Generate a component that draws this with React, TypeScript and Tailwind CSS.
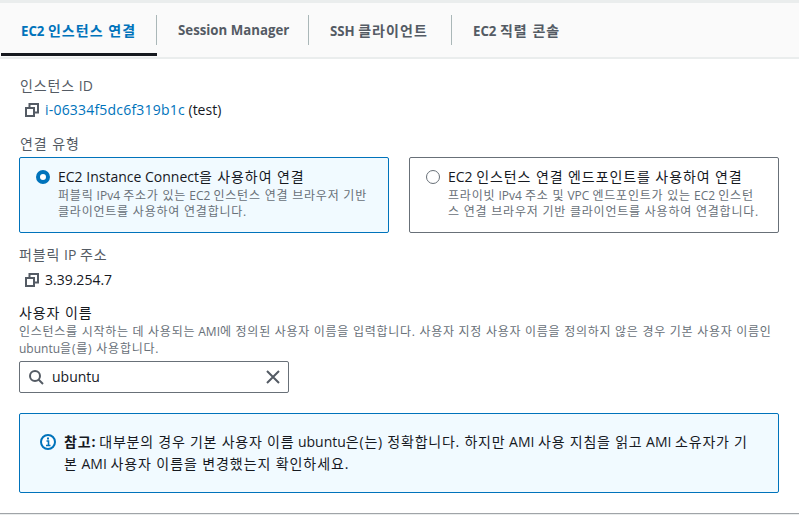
const font = "font-['Open_Sans','Noto_Sans_CJK_KR',sans-serif]";

// hangul in the shot is wider than Noto's, so hangul runs get some tracking
function K({ children, cls = "tracking-[0.065em]" }: { children: string; cls?: string }) {
  const parts = children.split(/([\uac00-\ud7a3]+(?:[ .,:()]*[\uac00-\ud7a3]+)*)/);
  return (
    <span>
      {parts.map((p, i) =>
        i % 2 === 1 ? (
          <span key={i} className={cls}>
            {p}
          </span>
        ) : (
          <span key={i}>{p}</span>
        ),
      )}
    </span>
  );
}

function CopyIcon() {
  return (
    <svg viewBox="0 0 14 14" className="h-[14px] w-[14px] shrink-0" fill="none" stroke="#545b64" strokeWidth="2">
      <path d="M1 5h8v8H1z" />
      <path d="M4.5 4V1H13v8.5h-3.5" />
    </svg>
  );
}

function Tab({ label, width, active, last }: { label: string; width: string; active?: boolean; last?: boolean }) {
  return (
    <div className={`relative flex h-[53px] items-center pt-[2px] pl-[21px] text-[13.25px] font-bold whitespace-nowrap ${width} ${active ? "text-[#0073bb]" : "text-[#545b64]"}`}>
      <K cls="text-[14px] tracking-[0.075em]">{label}</K>
      {active && <div className="absolute right-0 bottom-0 left-[1px] h-[3px] bg-[#16191f]" />}
      {!last && <div className="absolute top-3 right-0 h-[30px] w-px bg-[#aab7b8]" />}
    </div>
  );
}

function Option({ title, lines, active }: { title: string; lines: string[]; active?: boolean }) {
  return (
    <div className={`flex h-[76px] w-[370px] gap-2 rounded-[2px] border px-4 pt-[10px] ${active ? "border-[#0073bb] bg-[#f1faff]" : "border-[#687078] bg-white"}`}>
      {active ? (
        <div className="mt-[2px] h-[14px] w-[14px] shrink-0 rounded-full border-[4px] border-[#0073bb] bg-white" />
      ) : (
        <div className="mt-[2px] h-[14px] w-[14px] shrink-0 rounded-full border border-[#687078] bg-white" />
      )}
      <div>
        <div className="text-[14px] leading-[18px] whitespace-nowrap text-[#16191f]">
          <K>{title}</K>
        </div>
        <div className="mt-[2px] text-[12px] leading-[16px] whitespace-nowrap text-[#687078]">
          {lines.map((l) => (
            <div key={l}>
              <K>{l}</K>
            </div>
          ))}
        </div>
      </div>
    </div>
  );
}

export default function App() {
  return (
    <div className={`h-[515px] w-[799px] overflow-hidden bg-white ${font}`}>
      <div className="h-[3px] bg-[#eaeded]" />
      <div className="flex h-[56px] items-start border-b-2 border-[#eaeded] bg-[#fafafa]">
        <Tab label="EC2 인스턴스 연결" width="w-[157px] pl-[20px]" active />
        <Tab label="Session Manager" width="w-[152px]" />
        <Tab label="SSH 클라이언트" width="w-[143px]" />
        <Tab label="EC2 직렬 콘솔" width="w-[150px]" last />
      </div>

      <div className="px-[19px] text-[14px] text-[#16191f]">
        <div className="mt-[17px] pl-[1px] text-[14px] leading-[20px] text-[#545b64]">
          <K>인스턴스 ID</K>
        </div>
        <div className="mt-[4px] flex items-center gap-[6px] pl-[6px] leading-[20px]">
          <CopyIcon />
          <div>
            <span className="tracking-[0.2px] text-[#0073bb]">i-06334f5dc6f319b1c</span> (test)
          </div>
        </div>

        <div className="mt-[14px] pl-[1px] leading-[20px] text-[#545b64]">
          <K>연결 유형</K>
        </div>
        <div className="mt-[3px] flex gap-5">
          <Option
            active
            title="EC2 Instance Connect을 사용하여 연결"
            lines={["퍼블릭 IPv4 주소가 있는 EC2 인스턴스 연결 브라우저 기반", "클라이언트를 사용하여 연결합니다."]}
          />
          <Option
            title="EC2 인스턴스 연결 엔드포인트를 사용하여 연결"
            lines={["프라이빗 IPv4 주소 및 VPC 엔드포인트가 있는 EC2 인스턴", "스 연결 브라우저 기반 클라이언트를 사용하여 연결합니다."]}
          />
        </div>

        <div className="mt-[12px] leading-[20px] text-[#545b64]">
          <K>퍼블릭 IP 주소</K>
        </div>
        <div className="mt-[5px] flex items-center gap-[6px] pl-[6px] leading-[20px]">
          <CopyIcon />
          <div>3.39.254.7</div>
        </div>

        <div className="mt-[13px] leading-[20px] text-[#16191f]">
          <K>사용자 이름</K>
        </div>
        <div className="text-[12px] leading-[17px] whitespace-nowrap text-[#687078]">
          <div>
            <K cls="tracking-[0.06em]">인스턴스를 시작하는 데 사용되는 AMI에 정의된 사용자 이름을 입력합니다. 사용자 지정 사용자 이름을 정의하지 않은 경우 기본 사용자 이름인</K>
          </div>
          <div>
            <K>ubuntu을(를) 사용합니다.</K>
          </div>
        </div>

        <div className="mt-[4px] flex h-[32px] w-[270px] items-center rounded-[2px] border border-[#687078] bg-white pr-[7px] pl-[8px]">
          <svg viewBox="0 0 16 16" className="h-4 w-4 shrink-0" fill="none" stroke="#545b64" strokeWidth="2">
            <circle cx="7" cy="7" r="5" />
            <path d="M10.5 10.5 15 15" />
          </svg>
          <div className="ml-[8px] flex-1 leading-[20px]">ubuntu</div>
          <svg viewBox="0 0 16 16" className="h-4 w-4 shrink-0" fill="none" stroke="#545b64" strokeWidth="2">
            <path d="M2 2l12 12M14 2 2 14" />
          </svg>
        </div>

        <div className="mt-[20px] flex h-[80px] w-[760px] gap-[8px] rounded-[2px] border border-[#0073bb] bg-[#f1faff] pt-[17px] pl-[20px]">
          <svg viewBox="0 0 16 16" className="mt-[3px] h-4 w-4 shrink-0">
            <circle cx="8" cy="8" r="7" fill="#fff" stroke="#0073bb" strokeWidth="2" />
            <path d="M6.5 7h2v4.5M6 11.5h4.5" fill="none" stroke="#0073bb" strokeWidth="1.6" />
            <path d="M7 3.6h2v2H7z" fill="#0073bb" />
          </svg>
          <div className="leading-[22px] whitespace-nowrap">
            <div>
              <span className="font-bold">
                <K>참고:</K>
              </span>{" "}
              <K cls="tracking-[0.055em]">대부분의 경우 기본 사용자 이름 ubuntu은(는) 정확합니다. 하지만 AMI 사용 지침을 읽고 AMI 소유자가 기</K>
            </div>
            <div>
              <K>본 AMI 사용자 이름을 변경했는지 확인하세요.</K>
            </div>
          </div>
        </div>
      </div>
      <div className="mt-[20px] h-[1px] bg-[#a0a4a8]" />
      <div className="h-[2px] bg-[#eaeded]" />
    </div>
  );
}
